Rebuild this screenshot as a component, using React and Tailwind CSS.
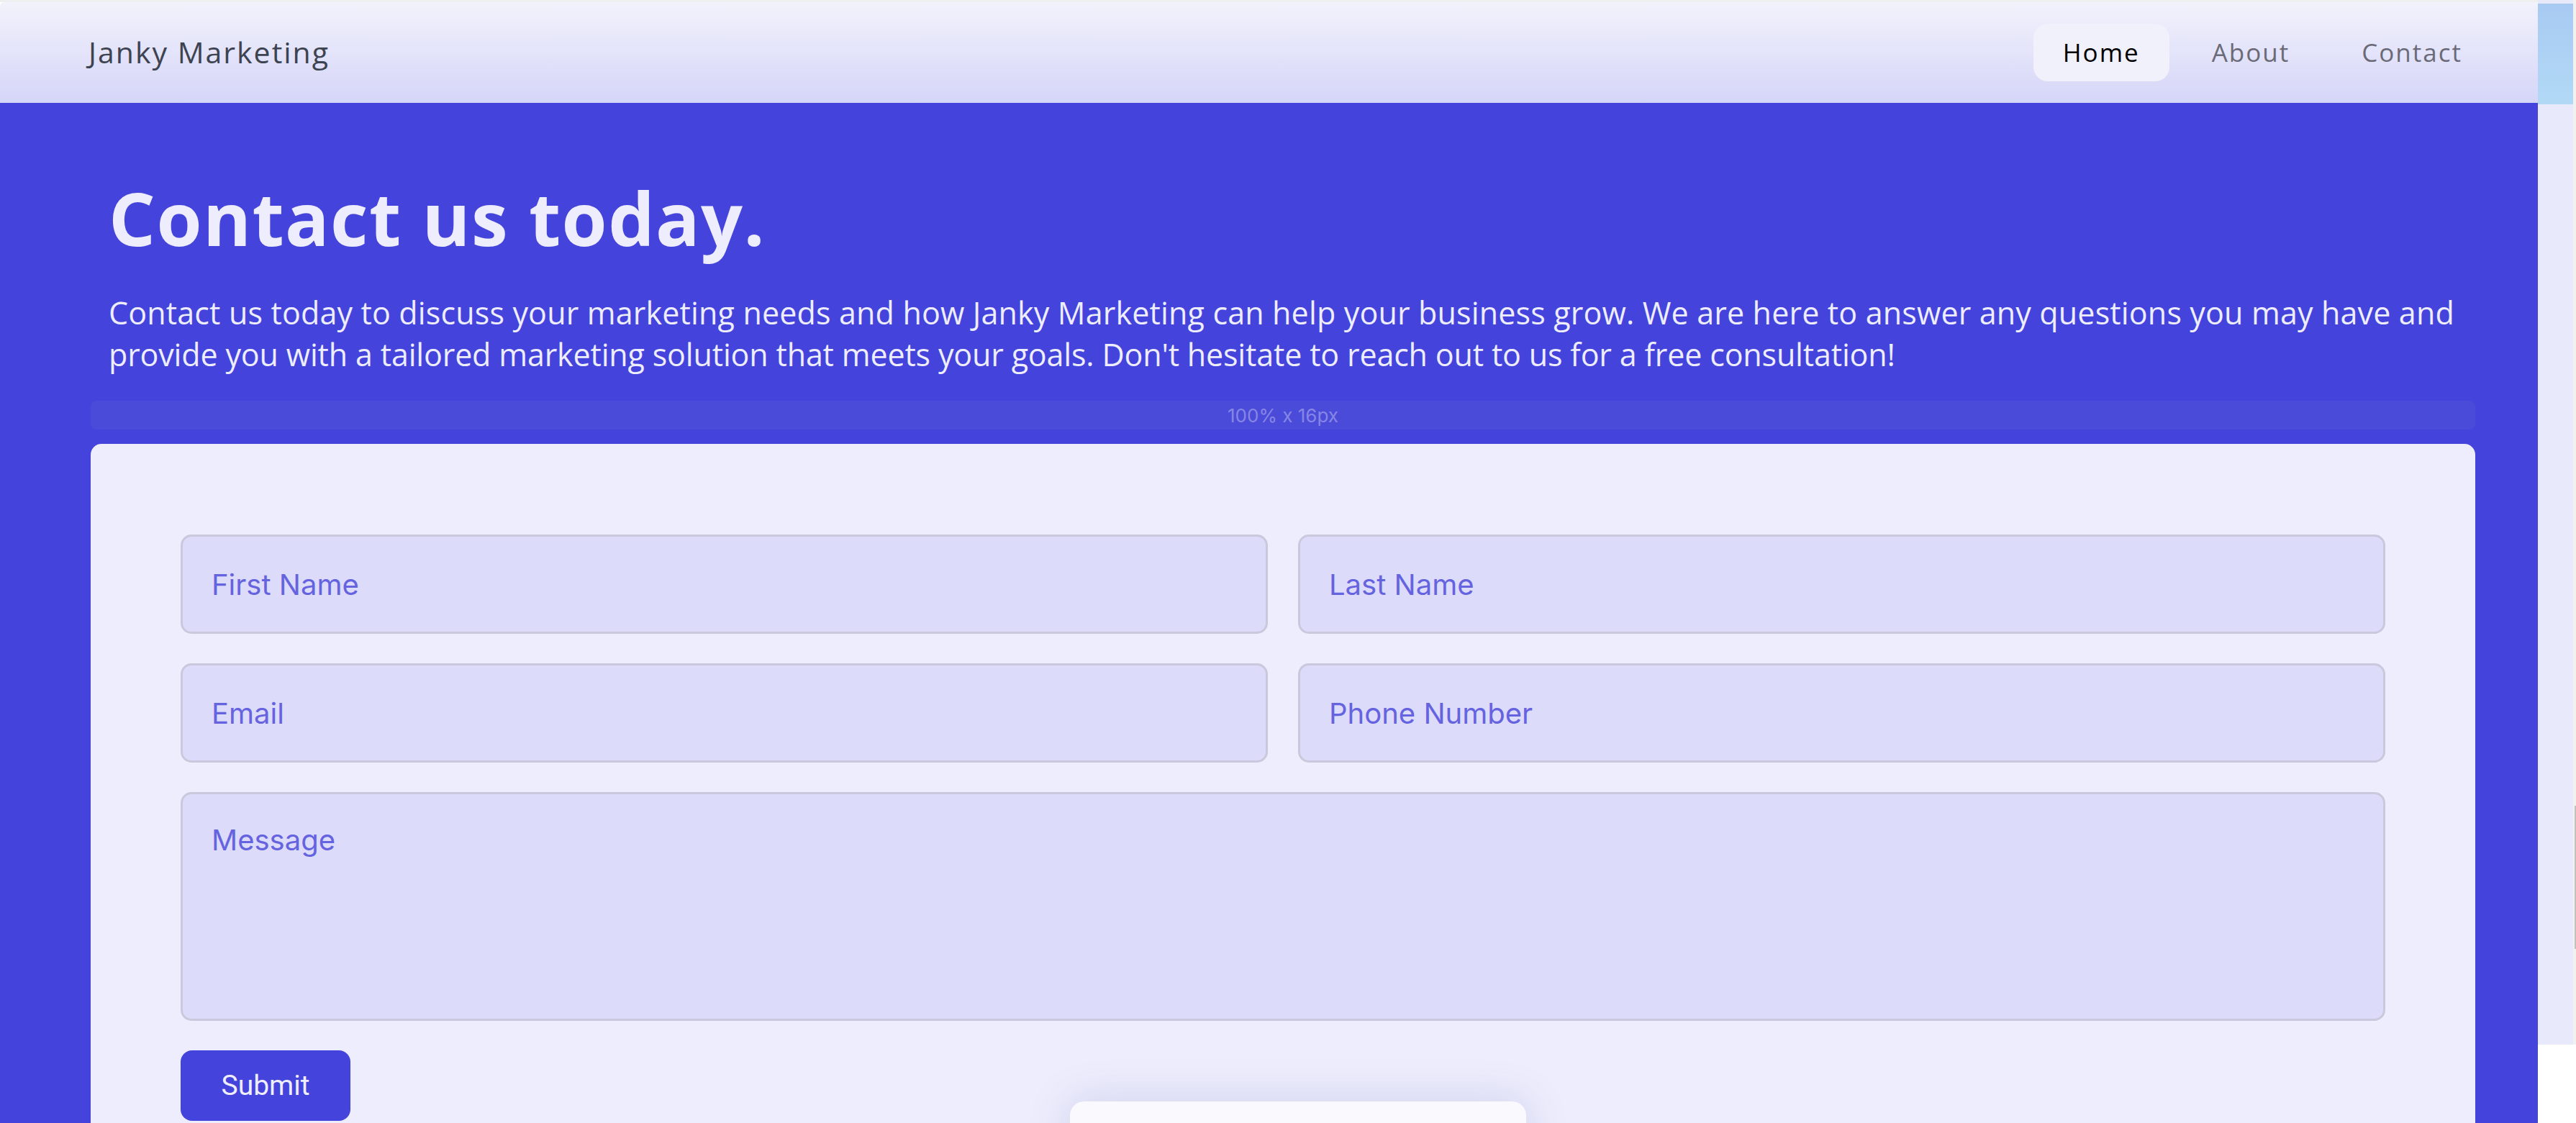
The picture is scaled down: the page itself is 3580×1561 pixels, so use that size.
import React from "react";

const poppins = { fontFamily: '"Open Sans", "Noto Sans", sans-serif' };

function NavItem({ label, active }) {
  return (
    <a
      href="#"
      className={
        "h-[80px] px-[41px] flex items-center rounded-[20px] text-[35px] tracking-[2px] " +
        (active ? "bg-[#f1f1fc] text-black" : "text-[#6b6b78]")
      }
    >
      {label}
    </a>
  );
}

function Field({ placeholder }) {
  return (
    <input
      type="text"
      placeholder={placeholder}
      className="h-[138px] w-full rounded-[15px] border-[3px] border-[#c9c8dd] bg-[#dcdbf9] px-[40px] text-[40px] text-[#2f2d8a] placeholder:text-[#6563e0] outline-none"
      style={{ fontFamily: "Inter, sans-serif" }}
    />
  );
}

export default function App() {
  return (
    <div className="relative flex h-[1561px] w-[3580px] overflow-hidden bg-white">
      {/* page */}
      <div className="flex w-[3527px] shrink-0 flex-col" style={poppins}>
        <div className="h-[3px] shrink-0 bg-[#efefef]" />
        <header className="flex h-[140px] shrink-0 items-center justify-between rounded-tl-[6px] bg-gradient-to-b from-[#f2f2fc] to-[#d5d5f8] pl-[123px] pr-[64px]">
          <span className="text-[41px] tracking-[2px] text-[#3d4350]">Janky Marketing</span>
          <nav className="flex items-center gap-[18px]">
            <NavItem label="Home" active />
            <NavItem label="About" />
            <NavItem label="Contact" />
          </nav>
        </header>

        <main className="flex-1 bg-[#4443dc] pl-[126px] pr-[87px] pt-[99px]">
          <div className="px-[25px] text-[#ededfd]">
            <h1 className="text-[102px] font-bold leading-[1.2] tracking-[1.4px]">Contact us today.</h1>
            <p className="mt-[42px] text-[43px] leading-[58px] tracking-[0.16px]">
              Contact us today to discuss your marketing needs and how Janky Marketing can help your business grow. We are here to answer any questions you may have and
              <br />
              <span className="tracking-[-0.16px]">
                provide you with a tailored marketing solution that meets your goals. Don't hesitate to reach out to us for a free consultation!
              </span>
            </p>
          </div>

          <div
            className="mt-[35px] flex h-[40px] items-center justify-center rounded-[8px] bg-[#4b4bda] text-[26px] text-[#8686e4]"
            style={{ fontFamily: "Inter, sans-serif" }}
          >
            100% x 16px
          </div>

          <div className="mt-[20px] rounded-t-[15px] bg-[#ededfd] px-[125px] pt-[126px] pb-[80px]">
            <form className="flex flex-col gap-[41px]">
              <div className="grid grid-cols-2 gap-x-[42px] gap-y-[41px]">
                <Field placeholder="First Name" />
                <Field placeholder="Last Name" />
                <Field placeholder="Email" />
                <Field placeholder="Phone Number" />
              </div>
              <textarea
                placeholder="Message"
                className="h-[318px] w-full resize-none rounded-[15px] border-[3px] border-[#c9c8dd] bg-[#dcdbf9] px-[40px] pt-[34px] text-[40px] leading-[1.5] placeholder:text-[#6563e0] outline-none"
                style={{ fontFamily: "Inter, sans-serif" }}
              />
              <div>
                <button
                  type="button"
                  className="h-[98px] w-[236px] rounded-[16px] bg-[#4443dc] text-[39px] text-[#eeeeff]"
                  style={{ fontFamily: "Roboto, Inter, sans-serif" }}
                >
                  Submit
                </button>
              </div>
            </form>
          </div>
        </main>
      </div>

      {/* side column */}
      <div className="flex h-[1452px] w-[49px] shrink-0 flex-col bg-[#e9e9fc] pt-[5px]">
        <div className="h-[140px] bg-gradient-to-b from-[#a8caf2] to-[#b2d9f6]" />
      </div>

      {/* scrollbar */}
      <div className="relative h-[1452px] w-[4px] shrink-0 bg-[#f1f1f1]">
        <div className="absolute left-[2px] top-[1120px] h-[199px] w-[2px] bg-[#c1c1c1]" />
      </div>

      {/* floating panel */}
      <div className="absolute left-[1487px] top-[1531px] h-[80px] w-[634px] rounded-[20px] bg-[#fafafe] shadow-[0_0_60px_rgba(80,80,160,0.18)]" />
    </div>
  );
}
